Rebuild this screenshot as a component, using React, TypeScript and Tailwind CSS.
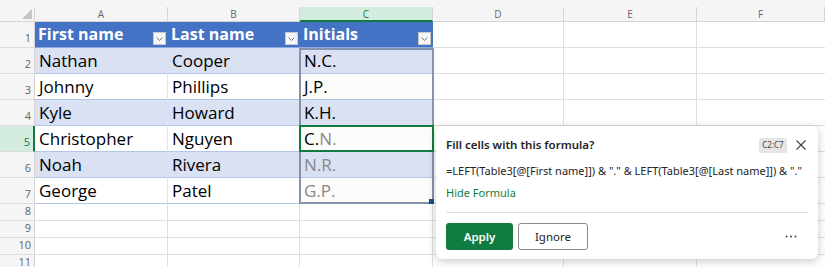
import React from "react";

const W = ["w-[35px]", "w-[133px]", "w-[132px]", "w-[133px]", "w-[131px]", "w-[133px]", "w-[128px]"];

type DataRow = { n: number; a: string; b: string; c: React.ReactNode; band?: boolean; gray?: boolean };

const rows: DataRow[] = [
    { n: 2, a: "Nathan", b: "Cooper", c: "N.C.", band: true },
    { n: 3, a: "Johnny", b: "Phillips", c: "J.P." },
    { n: 4, a: "Kyle", b: "Howard", c: "K.H.", band: true },
    { n: 5, a: "Christopher", b: "Nguyen", c: <><span className="text-black">C.</span><span className="text-[#8a8a8a]">N.</span></> },
    { n: 6, a: "Noah", b: "Rivera", c: "N.R.", band: true, gray: true },
    { n: 7, a: "George", b: "Patel", c: "G.P.", gray: true },
];

function FilterBtn() {
    return (
        <div className="w-[13px] h-[13px] bg-[#f7f7f7] border border-[#c9c9c9] flex items-center justify-center shrink-0">
            <svg width="7" height="4" viewBox="0 0 7 4">
                <path d="M0.5 0.5 L3.5 3.5 L6.5 0.5" fill="none" stroke="#777" strokeWidth="1" />
            </svg>
        </div>
    );
}

function RowHead({ n, h, active }: { n: number; h: string; active?: boolean }) {
    return (
        <div className={`${W[0]} ${h} shrink-0 flex items-end justify-end pr-[3px] pb-[2px] text-[11px] leading-[14px] border-b border-[#dcdcdc] ${active ? "bg-[#d3ecdd] text-[#107c41] border-r-2 border-r-[#107c41]" : "bg-[#f5f5f5] text-[#666] border-r border-r-[#d4d4d4]"}`}>
            {n}
        </div>
    );
}

function EmptyCells({ h }: { h: string }) {
    return (
        <>
            <div className={`${W[4]} ${h} shrink-0 border-r border-b border-[#dedede]`} />
            <div className={`${W[5]} ${h} shrink-0 border-r border-b border-[#dedede]`} />
            <div className={`${W[6]} ${h} shrink-0 border-b border-[#dedede]`} />
        </>
    );
}

export default function App() {
    return (
        <div className="relative w-[825px] h-[267px] overflow-hidden bg-white font-['Open_Sans',sans-serif]">
            {/* top strip */}
            <div className="h-[7px] bg-[#f5f5f5]" />

            {/* column headers */}
            <div className="flex h-[15px] text-[10px] leading-[14px] text-[#666]">
                <div className={`${W[0]} shrink-0 bg-[#f5f5f5] border-r border-b border-[#d4d4d4] flex justify-end items-end pr-[2px] pb-[2px]`}>
                    <svg width="10" height="10" viewBox="0 0 10 10"><path d="M10 0 L10 10 L0 10 Z" fill="#c4c4c4" /></svg>
                </div>
                {["A", "B", "C", "D", "E", "F"].map((l, i) => (
                    <div
                        key={l}
                        className={`${W[i + 1]} shrink-0 flex justify-center ${l === "C" ? "bg-[#d3ecdd] text-[#107c41] border-b-2 border-b-[#107c41] border-r border-r-[#d4d4d4]" : "bg-[#f5f5f5] border-r border-b border-[#d4d4d4]"}`}
                    >
                        {l}
                    </div>
                ))}
            </div>

            {/* table header row */}
            <div className="flex">
                <RowHead n={1} h="h-[26px]" />
                {["First name", "Last name", "Initials"].map((t, i) => (
                    <div key={t} className={`${W[i + 1]} h-[26px] shrink-0 bg-[#4472c4] flex items-end justify-between pl-[3px] pr-[2px] pb-[2px] border-b border-[#8ea9db]`}>
                        <span className="text-white font-bold text-[16px] leading-[21px] mb-[0px]">{t}</span>
                        <FilterBtn />
                    </div>
                ))}
                <EmptyCells h="h-[26px]" />
            </div>

            {/* table data rows */}
            {rows.map((r) => {
                const bg = r.band ? "bg-[#d9e1f2]" : "bg-white";
                const cbg = r.band ? "bg-[#d9e1f2]" : "bg-[#fcfcfa]";
                return (
                    <div key={r.n} className="flex">
                        <RowHead n={r.n} h="h-[26px]" active={r.n === 5} />
                        <div className={`${W[1]} h-[26px] shrink-0 ${bg} border-r border-r-[#dfe5ef] border-b border-b-[#b4c6e7] flex items-end pl-[4px] pb-[1px]`}>
                            <span className="text-[17px] leading-[23px] text-black">{r.a}</span>
                        </div>
                        <div className={`${W[2]} h-[26px] shrink-0 ${bg} border-b border-b-[#b4c6e7] flex items-end pl-[4px] pb-[1px]`}>
                            <span className="text-[17px] leading-[23px] text-black">{r.b}</span>
                        </div>
                        <div className={`${W[3]} h-[26px] shrink-0 ${cbg} border-b border-b-[#b4c6e7] flex items-end pl-[4px] pb-[1px]`}>
                            <span className={`text-[17px] leading-[23px] ${r.gray ? "text-[#8a8a8a]" : "text-black"}`}>{r.c}</span>
                        </div>
                        <EmptyCells h="h-[26px]" />
                    </div>
                );
            })}

            {/* empty rows */}
            {[8, 9, 10, 11].map((n) => (
                <div key={n} className="flex">
                    <RowHead n={n} h="h-[17px]" />
                    <div className={`${W[1]} h-[17px] shrink-0 border-r border-b border-[#dedede]`} />
                    <div className={`${W[2]} h-[17px] shrink-0 border-r border-b border-[#dedede]`} />
                    <div className={`${W[3]} h-[17px] shrink-0 border-r border-b border-[#dedede]`} />
                    <EmptyCells h="h-[17px]" />
                </div>
            ))}

            {/* flash fill range outline C2:C7 */}
            <div className="absolute left-[299px] top-[48px] w-[135px] h-[156px] border-2 border-[#8593ad] pointer-events-none" />
            {/* active cell C5 */}
            <div className="absolute left-[299px] top-[125px] w-[135px] h-[27px] border-2 border-[#107c41] pointer-events-none" />
            {/* fill handle */}
            <div className="absolute left-[429px] top-[199px] w-[5px] h-[5px] bg-[#1f4e79]" />

            {/* flash fill suggestion popup */}
            <div className="absolute left-[436px] top-[126px] w-[382px] h-[133px] bg-white rounded-[6px] shadow-[0_2px_10px_rgba(0,0,0,0.22)] px-[10px] pt-[5px] font-['Noto_Sans',sans-serif]">
                <div className="flex items-center h-[28px]">
                    <span className="text-[11.5px] font-semibold text-[#242424]">Fill cells with this formula?</span>
                    <span className="ml-auto bg-[#e6e6e6] text-[#444] text-[8px] rounded-[2px] h-[15px] w-[28px] flex items-center justify-center">C2:C7</span>
                    <svg className="ml-[9px] mr-[2px]" width="10" height="10" viewBox="0 0 10 10">
                        <path d="M0.5 0.5 L9.5 9.5 M9.5 0.5 L0.5 9.5" stroke="#424242" strokeWidth="1.1" />
                    </svg>
                </div>
                <div className="mt-[4px] text-[11px] leading-[15px] text-[#242424] whitespace-nowrap">
                    =LEFT(Table3[@[First name]]) &amp; "." &amp; LEFT(Table3[@[Last name]]) &amp; "."
                </div>
                <div className="mt-[7px] text-[11px] leading-[15px] text-[#107c41]">Hide Formula</div>
                <div className="mt-[12px] h-px bg-[#e0e0e0]" />
                <div className="mt-[10px] flex items-center gap-[5px]">
                    <button className="w-[67px] h-[27px] bg-[#107c41] text-white text-[11.5px] font-semibold rounded-[3px]">Apply</button>
                    <button className="w-[70px] h-[27px] bg-white border border-[#8a8a8a] text-[#242424] text-[11.5px] rounded-[3px]">Ignore</button>
                    <svg className="ml-auto mr-[11px]" width="12" height="3" viewBox="0 0 12 3">
                        <circle cx="1.5" cy="1.5" r="1" fill="#424242" />
                        <circle cx="6" cy="1.5" r="1" fill="#424242" />
                        <circle cx="10.5" cy="1.5" r="1" fill="#424242" />
                    </svg>
                </div>
            </div>
        </div>
    );
}
